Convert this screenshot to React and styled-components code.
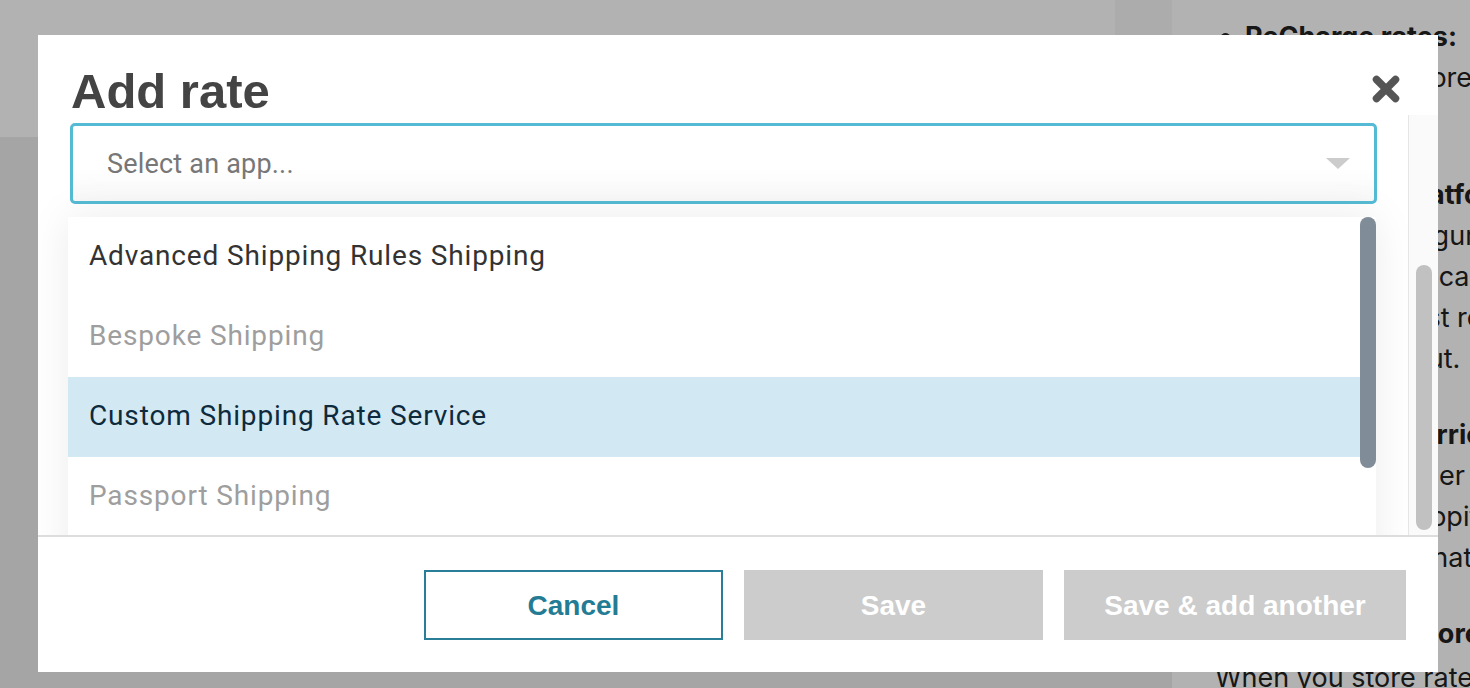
import React from "react";
import styled, { createGlobalStyle } from "styled-components";

const GlobalStyle = createGlobalStyle`
  html, body {
    margin: 0;
    padding: 0;
  }
  body {
    width: 1470px;
    height: 688px;
    overflow: hidden;
    font-family: "Roboto", "Liberation Sans", sans-serif;
  }
  * {
    box-sizing: border-box;
  }
`;

// page behind the dialog
const Page = styled.div`
  display: flex;
  width: 1470px;
  height: 688px;
`;

const LeftArea = styled.div`
  width: 1172px;
  display: flex;
  flex-direction: column;
`;

const TopRow = styled.div`
  height: 137px;
  display: flex;
`;

const HeaderBar = styled.div`
  flex: 1;
  background: #fff;
`;

const HeaderGap = styled.div`
  width: 57px;
  background: #f6f6f6;
`;

const MainArea = styled.div`
  flex: 1;
  background: #ededed;
`;

const HelpPanel = styled.div`
  flex: 1;
  background: #fff;
  padding: 16px 0 0 43px;
  overflow: hidden;
  font-family: "Inter", "Liberation Sans", sans-serif;
  font-size: 27px;
  line-height: 41px;
  color: #222;
  white-space: nowrap;
`;

const HelpList = styled.ul`
  margin: 0;
  padding-left: 30px;
  list-style: disc;
`;

const HelpItem = styled.li`
  margin-bottom: 35px;
`;

const HelpTitle = styled.div`
  font-weight: 700;
`;

const HelpLine = styled.div``;

const HelpHeading = styled.div`
  font-weight: 700;
`;

const HelpText = styled.div`
  margin-top: 3px;
`;

// dialog
const Overlay = styled.div`
  position: fixed;
  inset: 0;
  background: rgba(0, 0, 0, 0.3);
  padding: 35px 0 0 38px;
`;

const Modal = styled.div`
  width: 1400px;
  height: 637px;
  background: #fff;
  display: flex;
  flex-direction: column;
`;

const ModalHeader = styled.div`
  height: 80px;
  display: flex;
  justify-content: space-between;
  align-items: flex-start;
  padding: 0 38px 0 33px;
`;

const Title = styled.h2`
  margin: 31px 0 0;
  font-family: "Liberation Sans", Arial, sans-serif;
  font-size: 49px;
  line-height: 50px;
  font-weight: 700;
  color: #444;
`;

const CloseButton = styled.button`
  margin-top: 40px;
  width: 28px;
  height: 28px;
  padding: 0;
  border: none;
  background: none;
  cursor: pointer;
  display: flex;
`;

const ModalBody = styled.div`
  flex: 1;
  display: flex;
  min-height: 0;
`;

const BodyContent = styled.div`
  flex: 1;
  padding: 8px 31px 0 32px;
  overflow: hidden;
`;

const BodyTrack = styled.div`
  width: 30px;
  border-left: 1px solid #e6e6e6;
  background: #fafafa;
  padding: 150px 0 0 7px;
`;

const BodyThumb = styled.div`
  width: 16px;
  height: 265px;
  border-radius: 8px;
  background: #c1c1c1;
`;

const SelectBox = styled.div`
  height: 81px;
  border: 3px solid #55bbd4;
  border-radius: 5px;
  background: linear-gradient(#fff 55%, #f8f8f8);
  display: flex;
  align-items: center;
  justify-content: space-between;
  padding: 0 24px 0 34px;
`;

const Placeholder = styled.span`
  font-size: 27px;
  letter-spacing: 0.2px;
  color: #777;
`;

const Caret = styled.span`
  width: 0;
  height: 0;
  border-left: 12px solid transparent;
  border-right: 12px solid transparent;
  border-top: 11px solid #ccc;
`;

const Menu = styled.div`
  margin: 13px 1px 0 -2px;
  display: flex;
  background: #fff;
  box-shadow: 0 0 40px rgba(0, 0, 0, 0.08);
`;

const OptionList = styled.div`
  flex: 1;
`;

const Option = styled.div`
  height: 80px;
  display: flex;
  align-items: center;
  padding: 0 0 4px 21px;
  font-size: 28px;
  letter-spacing: 0.85px;
  color: ${(p) => (p.$disabled ? "#9e9e9e" : p.$active ? "#0e2a3d" : "#333")};
  background: ${(p) => (p.$active ? "#d2e9f3" : "#fff")};
`;

const MenuTrack = styled.div`
  width: 16px;
`;

const MenuThumb = styled.div`
  height: 251px;
  border-radius: 8px;
  background: #808d98;
`;

const Footer = styled.div`
  height: 137px;
  border-top: 2px solid #ddd;
  display: flex;
  justify-content: flex-end;
  align-items: flex-start;
  gap: 21px;
  padding: 33px 32px 0 0;
`;

const Button = styled.button`
  width: ${(p) => p.$width}px;
  height: 70px;
  padding: 2px 0 0;
  font-family: "Liberation Sans", Arial, sans-serif;
  font-size: 28px;
  font-weight: 700;
  border: ${(p) => (p.$outline ? "2px solid #2b7e97" : "none")};
  background: ${(p) => (p.$outline ? "#fff" : "#ccc")};
  color: ${(p) => (p.$outline ? "#237c94" : "#fff")};
  cursor: pointer;
`;

const options = [
  { label: "Advanced Shipping Rules Shipping" },
  { label: "Bespoke Shipping", disabled: true },
  { label: "Custom Shipping Rate Service", active: true },
  { label: "Passport Shipping", disabled: true },
  { label: "ShipperHQ" },
];

function CloseIcon() {
  return (
    <svg width="28" height="28" viewBox="0 0 28 28">
      <path
        d="M4.5 4.5 L23.5 23.5 M23.5 4.5 L4.5 23.5"
        stroke="#555"
        strokeWidth="7.5"
        strokeLinecap="round"
        fill="none"
      />
    </svg>
  );
}

export default function App() {
  return (
    <>
      <GlobalStyle />
      <Page>
        <LeftArea>
          <TopRow>
            <HeaderBar />
            <HeaderGap />
          </TopRow>
          <MainArea />
        </LeftArea>
        <HelpPanel>
          <HelpList>
            <HelpItem>
              <HelpTitle>ReCharge rates:</HelpTitle>
              <HelpLine>Rates are all stored in ReCharge</HelpLine>
              <HelpLine>for orders.</HelpLine>
            </HelpItem>
            <HelpItem>
              <HelpTitle>Third-party platform rates:</HelpTitle>
              <HelpLine>Rates we configure in your platform</HelpLine>
              <HelpLine>settings, users can offer them to</HelpLine>
              <HelpLine>customers must review</HelpLine>
              <HelpLine>during checkout.</HelpLine>
            </HelpItem>
            <HelpItem>
              <HelpTitle>Third-party carrier rates:</HelpTitle>
              <HelpLine>Fees from carrier apps, for</HelpLine>
              <HelpLine>and for any Shopify cart</HelpLine>
              <HelpLine>and each destination.</HelpLine>
            </HelpItem>
          </HelpList>
          <HelpHeading>So why do you store rates?</HelpHeading>
          <HelpText>When you store rates in ReCharge</HelpText>
        </HelpPanel>
      </Page>

      <Overlay>
        <Modal>
          <ModalHeader>
            <Title>Add rate</Title>
            <CloseButton aria-label="Close">
              <CloseIcon />
            </CloseButton>
          </ModalHeader>
          <ModalBody>
            <BodyContent>
              <SelectBox>
                <Placeholder>Select an app...</Placeholder>
                <Caret />
              </SelectBox>
              <Menu>
                <OptionList>
                  {options.map((o) => (
                    <Option key={o.label} $disabled={o.disabled} $active={o.active}>
                      {o.label}
                    </Option>
                  ))}
                </OptionList>
                <MenuTrack>
                  <MenuThumb />
                </MenuTrack>
              </Menu>
            </BodyContent>
            <BodyTrack>
              <BodyThumb />
            </BodyTrack>
          </ModalBody>
          <Footer>
            <Button $outline $width={299}>Cancel</Button>
            <Button $width={299}>Save</Button>
            <Button $width={342}>Save &amp; add another</Button>
          </Footer>
        </Modal>
      </Overlay>
    </>
  );
}
